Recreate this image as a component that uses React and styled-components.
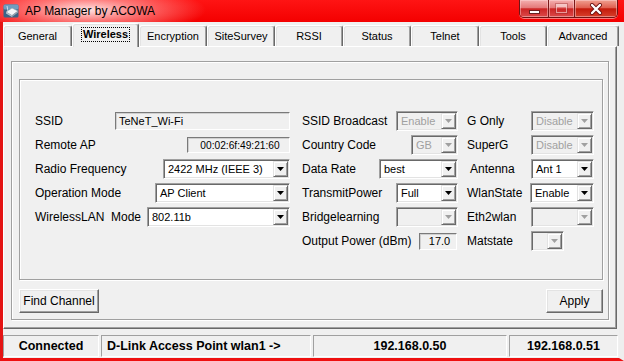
import React from 'react'
import styled, { createGlobalStyle } from 'styled-components'

const GlobalStyle = createGlobalStyle`
  html, body {
    margin: 0;
    padding: 0;
    background: #fff;
  }
  body {
    font-family: "Liberation Sans", Arial, sans-serif;
  }
  * {
    box-sizing: border-box;
  }
`

const tabs = [
  { name: 'General', w: 69 },
  { name: 'Wireless', w: 67, active: true },
  { name: 'Encryption', w: 68 },
  { name: 'SiteSurvey', w: 68 },
  { name: 'RSSI', w: 68 },
  { name: 'Status', w: 68 },
  { name: 'Telnet', w: 68 },
  { name: 'Tools', w: 68 },
  { name: 'Advanced', w: 72 },
]

// each column: label, then the control that sits flush right
const columns = [
  {
    w: 255,
    gap: 12,
    rows: [
      { label: 'SSID', kind: 'text', w: 175, h: 18, value: 'TeNeT_Wi-Fi', align: 'left' },
      { label: 'Remote AP', kind: 'text', w: 103, h: 16, value: '00:02:6f:49:21:60', align: 'center', size: 10.2 },
      { label: 'Radio Frequency', kind: 'combo', w: 127, value: '2422 MHz (IEEE 3)' },
      { label: 'Operation Mode', kind: 'combo', w: 135, value: 'AP Client' },
      { label: 'WirelessLAN  Mode', kind: 'combo', w: 143, value: '802.11b' },
    ],
  },
  {
    w: 156,
    gap: 9,
    rows: [
      { label: 'SSID Broadcast', kind: 'combo', w: 62, value: 'Enable', disabled: true },
      { label: 'Country Code', kind: 'combo', w: 47, value: 'GB', disabled: true },
      { label: 'Data Rate', kind: 'combo', w: 79, value: 'best' },
      { label: 'TransmitPower', kind: 'combo', w: 62, value: 'Full' },
      { label: 'Bridgelearning', kind: 'combo', w: 62, value: '', disabled: true },
      { label: 'Output Power (dBm)', kind: 'text', w: 38, h: 17, value: '17.0', align: 'center', mr: 1 },
    ],
  },
  {
    w: 127,
    gap: 0,
    rows: [
      { label: 'G Only', kind: 'combo', w: 63, value: 'Disable', disabled: true },
      { label: 'SuperG', kind: 'combo', w: 63, value: 'Disable', disabled: true },
      { label: 'Antenna', kind: 'combo', w: 63, value: 'Ant 1', indent: 3 },
      { label: 'WlanState', kind: 'combo', w: 64, value: 'Enable' },
      { label: 'Eth2wlan', kind: 'combo', w: 63, value: '', disabled: true },
      { label: 'Matstate', kind: 'combo', w: 33, value: '', disabled: true, mr: 30 },
    ],
  },
]

const status = [
  { text: 'Connected', w: 96, align: 'center' },
  { text: 'D-Link Access Point wlan1 ->', w: 210, align: 'flex-start' },
  { text: '192.168.0.50', w: 194, align: 'center' },
  { text: '192.168.0.51', w: 109, align: 'center' },
]

const AppIcon = () => (
  <svg width="16" height="16" viewBox="0 0 16 16">
    <rect x="0.5" y="1.5" width="15" height="13" rx="1.5" fill="#3a6688" />
    <rect x="0.5" y="1.5" width="15" height="5" rx="1.5" fill="#6f9dbf" />
    <polygon points="3,9 9,5 15,8 9,12.5" fill="#f4f6f8" stroke="#8a9aa8" strokeWidth="0.6" />
    <polygon points="3,9 9,12.5 9,14 3,10.5" fill="#b8c2cc" />
    <polygon points="9,12.5 15,8 15,9.5 9,14" fill="#98a4b0" />
    <line x1="5" y1="8" x2="4" y2="3" stroke="#e8eef3" strokeWidth="0.8" />
  </svg>
)

const DropArrow = ({ disabled }) => (
  <svg width="7" height="4" viewBox="0 0 7 4">
    <polygon points="0,0 7,0 3.5,4" fill={disabled ? '#a0a0a0' : '#000'} />
  </svg>
)

const Combo = ({ w, value, disabled, mr }) => (
  <ComboBox $w={w} $disabled={disabled} $mr={mr}>
    <ComboValue $disabled={disabled}>{value}</ComboValue>
    <ComboButton>
      <DropArrow disabled={disabled} />
    </ComboButton>
  </ComboBox>
)

const App = () => {
  return (
    <>
      <GlobalStyle />
      <Wrapper>
        <TitleBar>
          <AppIcon />
          <Title>AP Manager by ACOWA</Title>
          <ControlBox>
            <CtrlButton $w={28}>
              <MinGlyph />
            </CtrlButton>
            <CtrlButton $w={26}>
              <MaxGlyph />
            </CtrlButton>
            <CtrlButton $w={43} $close>
              <svg width="14" height="12" viewBox="0 0 14 12">
                <path d="M3 2 L11 10 M11 2 L3 10" stroke="#6a1010" strokeWidth="4" strokeLinecap="round" />
                <path d="M3 2 L11 10 M11 2 L3 10" stroke="#fff" strokeWidth="2.4" strokeLinecap="round" />
              </svg>
            </CtrlButton>
          </ControlBox>
        </TitleBar>

        <Body>
          <TabStrip>
            {tabs.map((t) => (
              <Tab key={t.name} $w={t.w} $active={t.active}>
                {t.active ? <FocusText>{t.name}</FocusText> : t.name}
              </Tab>
            ))}
          </TabStrip>

          <TabPage>
            <Frame>
              <GroupBox>
                <Columns>
                  {columns.map((col, i) => (
                    <Column key={i} $w={col.w} $gap={col.gap}>
                      {col.rows.map((r) => (
                        <Row key={r.label}>
                          <Label $indent={r.indent}>{r.label}</Label>
                          {r.kind === 'text' ? (
                            <TextBox $w={r.w} $h={r.h} $align={r.align} $mr={r.mr} $size={r.size}>
                              {r.value}
                            </TextBox>
                          ) : (
                            <Combo w={r.w} value={r.value} disabled={r.disabled} mr={r.mr} />
                          )}
                        </Row>
                      ))}
                    </Column>
                  ))}
                </Columns>
              </GroupBox>
              <ButtonRow>
                <PushButton $w={80}>Find Channel</PushButton>
                <PushButton $w={57}>Apply</PushButton>
              </ButtonRow>
            </Frame>
          </TabPage>

          <StatusBar>
            {status.map((s) => (
              <StatusPanel key={s.text} $w={s.w} $align={s.align}>
                {s.text}
              </StatusPanel>
            ))}
          </StatusBar>
        </Body>
      </Wrapper>
    </>
  )
}

const Wrapper = styled.div`
  width: 624px;
  height: 361px;
  display: flex;
  flex-direction: column;
  overflow: hidden;
  background: #f0f0f0;
`

const TitleBar = styled.div`
  height: 22px;
  flex: none;
  display: flex;
  align-items: center;
  padding-left: 3px;
  background:
    radial-gradient(ellipse 120px 26px at 86px 10px, rgba(255, 240, 240, 0.95) 0%, rgba(255, 170, 170, 0.65) 45%, rgba(255, 0, 0, 0) 100%),
    linear-gradient(#ff1414, #f40000);
`

const Title = styled.span`
  margin-left: 6px;
  font-size: 12px;
  color: #000;
  white-space: nowrap;
`

const ControlBox = styled.div`
  align-self: flex-start;
  margin-left: auto;
  margin-right: 6px;
  height: 18px;
  display: flex;
  border: 1px solid #701414;
  border-top: none;
  border-radius: 0 0 5px 5px;
  overflow: hidden;
  box-shadow: 0 1px 0 rgba(255, 200, 200, 0.6);
`

const CtrlButton = styled.div`
  width: ${(p) => p.$w}px;
  height: 100%;
  display: flex;
  align-items: center;
  justify-content: center;
  background: ${(p) =>
    p.$close
      ? 'linear-gradient(#f0a090 0%, #e06050 45%, #c41a0a 52%, #d8402c 100%)'
      : 'linear-gradient(#f4b0b0 0%, #e47a7a 45%, #cc2424 52%, #dc4a4a 100%)'};
  box-shadow: inset 0 0 0 1px rgba(255, 220, 220, 0.45);
  & + & {
    border-left: 1px solid #7a1818;
  }
`

const MinGlyph = styled.div`
  width: 11px;
  height: 4px;
  margin-top: 6px;
  background: #fff;
  border: 1px solid #6a2020;
`

const MaxGlyph = styled.div`
  width: 11px;
  height: 9px;
  border: 1px solid rgba(255, 255, 255, 0.5);
  border-top-width: 3px;
  box-shadow: 0 0 0 1px rgba(140, 40, 40, 0.35);
`

const Body = styled.div`
  flex: 1;
  display: flex;
  flex-direction: column;
  padding-top: 1px;
  border-left: 3px solid #e41414;
  border-right: 5px solid #eeeeee;
  border-bottom: 3px solid #ee1010;
`

const TabStrip = styled.div`
  display: flex;
  height: 24px;
  position: relative;
  z-index: 1;
`

const Tab = styled.div`
  width: ${(p) => p.$w}px;
  height: ${(p) => (p.$active ? 24 : 21)}px;
  margin-top: ${(p) => (p.$active ? 0 : 2)}px;
  display: flex;
  align-items: center;
  justify-content: center;
  padding-bottom: ${(p) => (p.$active ? 2 : 0)}px;
  font-size: 11px;
  font-weight: ${(p) => (p.$active ? 700 : 400)};
  color: #000;
  background: #f0f0f0;
  border: 1px solid;
  border-color: #ffffff #696969 transparent #ffffff;
  border-bottom: none;
  border-radius: 3px 3px 0 0;
  box-shadow: inset -1px 0 #a0a0a0, inset 1px 1px #e3e3e3;
`

const FocusText = styled.span`
  padding: 0 1px;
  outline: 1px dotted #000;
  outline-offset: 0;
  line-height: 13px;
`

const TabPage = styled.div`
  margin-top: -1px;
  margin-right: 2px;
  height: 283px;
  padding: 14px 7px 8px;
  border: 1px solid;
  border-color: #ffffff #696969 #696969 #ffffff;
  box-shadow: inset -1px -1px #a0a0a0;
`

const Frame = styled.div`
  height: 259px;
  display: flex;
  flex-direction: column;
  padding: 17px 5px 6px 7px;
  border: 1px solid #a0a0a0;
  box-shadow: inset 1px 1px #ffffff, 1px 1px #ffffff;
`

const GroupBox = styled.div`
  height: 201px;
  padding: 29px 0 0 15px;
  border: 1px solid #a0a0a0;
  box-shadow: inset 1px 1px #ffffff, 1px 1px #ffffff;
`

const Columns = styled.div`
  display: flex;
`

const Column = styled.div`
  width: ${(p) => p.$w}px;
  margin-right: ${(p) => p.$gap}px;
  display: flex;
  flex-direction: column;
`

const Row = styled.div`
  height: 24px;
  display: flex;
  align-items: center;
  justify-content: space-between;
`

const Label = styled.span`
  padding-left: ${(p) => p.$indent || 0}px;
  font-size: 12px;
  color: #000;
  white-space: pre;
`

const TextBox = styled.div`
  width: ${(p) => p.$w}px;
  height: ${(p) => p.$h}px;
  margin-right: ${(p) => p.$mr || 0}px;
  display: flex;
  align-items: center;
  justify-content: ${(p) => (p.$align === 'center' ? 'center' : 'flex-start')};
  padding-left: 3px;
  font-size: ${(p) => p.$size || 11}px;
  color: #000;
  background: #f0f0f0;
  border: 1px solid;
  border-color: #7a7a7a #ffffff #ffffff #7a7a7a;
  box-shadow: inset 1px 1px #d0d0d0;
  white-space: nowrap;
`

const ComboBox = styled.div`
  width: ${(p) => p.$w}px;
  height: 20px;
  margin-right: ${(p) => p.$mr || 0}px;
  display: flex;
  background: ${(p) => (p.$disabled ? '#f0f0f0' : '#ffffff')};
  border: 1px solid;
  border-color: #a0a0a0 #ffffff #ffffff #a0a0a0;
  box-shadow: inset 1px 1px #696969, inset -1px -1px #e3e3e3;
  padding: 1px;
`

const ComboValue = styled.div`
  flex: 1;
  min-width: 0;
  display: flex;
  align-items: center;
  padding-left: 3px;
  font-size: 11px;
  color: ${(p) => (p.$disabled ? '#a0a0a0' : '#000')};
  white-space: nowrap;
  overflow: hidden;
`

const ComboButton = styled.div`
  width: 15px;
  flex: none;
  display: flex;
  align-items: center;
  justify-content: center;
  background: #f0f0f0;
  border: 1px solid;
  border-color: #e3e3e3 #696969 #696969 #e3e3e3;
  box-shadow: inset 1px 1px #ffffff, inset -1px -1px #a0a0a0;
`

const ButtonRow = styled.div`
  margin-top: 9px;
  display: flex;
  justify-content: space-between;
`

const PushButton = styled.button`
  width: ${(p) => p.$w}px;
  height: 24px;
  padding: 0;
  font-family: "Liberation Sans", Arial, sans-serif;
  font-size: 12px;
  color: #000;
  background: #f0f0f0;
  border: 1px solid;
  border-color: #ffffff #696969 #696969 #ffffff;
  box-shadow: inset -1px -1px #a0a0a0, inset 1px 1px #e3e3e3;
  border-radius: 0;
`

const StatusBar = styled.div`
  display: flex;
  gap: 2px;
  padding: 6px 0 1px;
  height: 29px;
`

const StatusPanel = styled.div`
  width: ${(p) => p.$w}px;
  height: 22px;
  display: flex;
  align-items: center;
  justify-content: ${(p) => p.$align};
  padding-left: ${(p) => (p.$align === 'flex-start' ? 5 : 0)}px;
  font-size: 12.5px;
  font-weight: 700;
  color: #000;
  border: 1px solid;
  border-color: #a0a0a0 #ffffff #ffffff #a0a0a0;
  white-space: nowrap;
`

export default App
